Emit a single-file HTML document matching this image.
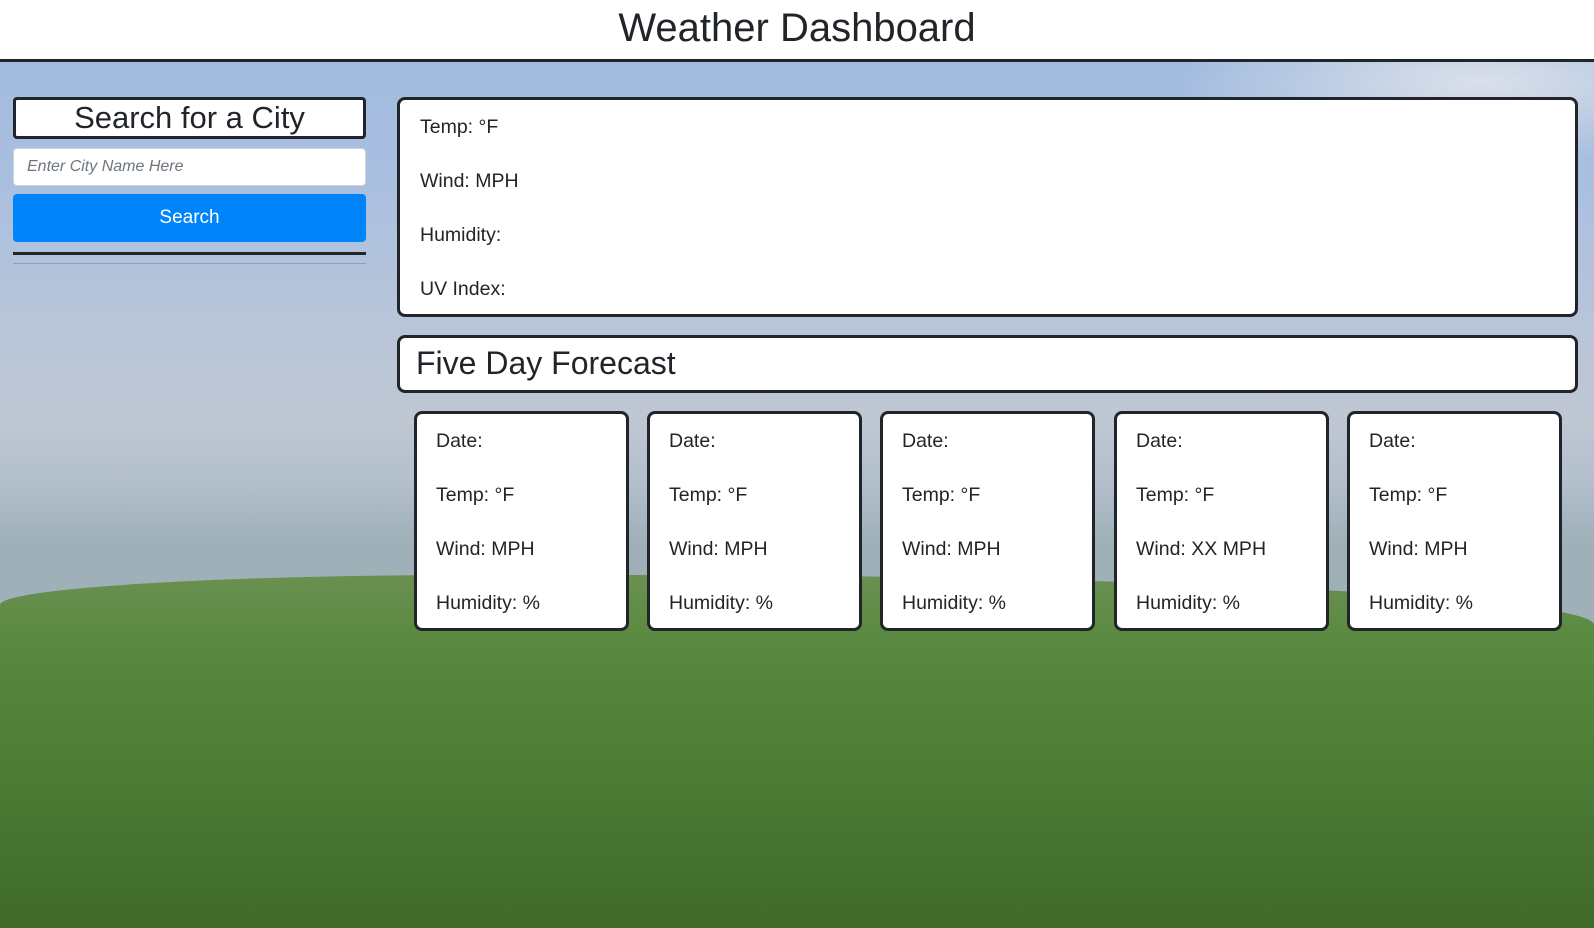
<!DOCTYPE html>
<html><head><meta charset="utf-8"><style>
*{box-sizing:border-box;margin:0;padding:0}
body{width:1594px;height:928px;overflow:hidden;font-family:"Liberation Sans",Arial,sans-serif;color:#212529;position:relative}
header{height:62px;background:#fff;border-bottom:3px solid #212529;text-align:center;font-size:40px;line-height:56px}
.bg{position:absolute;top:62px;left:0;width:1594px;height:866px;
background:
radial-gradient(ellipse 300px 80px at 1480px 20px,rgba(225,228,235,.9),rgba(225,228,235,0)),
linear-gradient(180deg,#a2bcdf 0px,#aabfe0 120px,#b7c4d9 250px,#bfc7d3 360px,#b3bfcc 420px,#9fb0b8 480px);}
.hill{position:absolute;left:0;top:575px;width:1594px;height:353px;background:linear-gradient(180deg,#6a9050,#5a8a42 60px,#4e7e36 180px,#3f6a2a 353px);border-radius:30% 60% 0 0/30px 50px 0 0}
.box{position:absolute;background:#fff;border:3px solid #212529;border-radius:8px}
.t{position:absolute;font-size:19.5px;white-space:nowrap}
</style></head><body>
<header>Weather Dashboard</header>
<div class="bg"></div>
<div class="hill"></div>
<div class="box" style="left:13px;top:97px;width:353px;height:42px;border-radius:4px;text-align:center;font-size:31px;line-height:36px">Search for a City</div>
<div style="position:absolute;left:13px;top:148px;width:353px;height:38px;background:#fff;border:1px solid #ced4da;border-radius:4px;font-style:italic;color:#6c757d;font-size:16px;line-height:36px;padding-left:13px">Enter City Name Here</div>
<div style="position:absolute;left:13px;top:194px;width:353px;height:48px;background:#0084fa;border-radius:4px;color:#fff;font-size:19px;line-height:48px;text-align:center">Search</div>
<div style="position:absolute;left:13px;top:252px;width:353px;height:3px;background:#212529"></div>
<div style="position:absolute;left:13px;top:263px;width:353px;height:1px;background:#8fa0b5"></div>
<div class="box" style="left:397px;top:97px;width:1181px;height:220px">
<div class="t" style="left:20px;top:16px">Temp: °F</div>
<div class="t" style="left:20px;top:70px">Wind: MPH</div>
<div class="t" style="left:20px;top:124px">Humidity:</div>
<div class="t" style="left:20px;top:178px">UV Index:</div>
</div>
<div class="box" style="left:397px;top:335px;width:1181px;height:58px;font-size:32px;line-height:50px;padding-left:16px">Five Day Forecast</div>
<div class="box" style="left:414px;top:411px;width:215px;height:220px"><div class="t" style="left:19px;top:16px">Date:</div><div class="t" style="left:19px;top:70px">Temp: °F</div><div class="t" style="left:19px;top:124px">Wind: MPH</div><div class="t" style="left:19px;top:178px">Humidity: %</div></div>
<div class="box" style="left:647px;top:411px;width:215px;height:220px"><div class="t" style="left:19px;top:16px">Date:</div><div class="t" style="left:19px;top:70px">Temp: °F</div><div class="t" style="left:19px;top:124px">Wind: MPH</div><div class="t" style="left:19px;top:178px">Humidity: %</div></div>
<div class="box" style="left:880px;top:411px;width:215px;height:220px"><div class="t" style="left:19px;top:16px">Date:</div><div class="t" style="left:19px;top:70px">Temp: °F</div><div class="t" style="left:19px;top:124px">Wind: MPH</div><div class="t" style="left:19px;top:178px">Humidity: %</div></div>
<div class="box" style="left:1114px;top:411px;width:215px;height:220px"><div class="t" style="left:19px;top:16px">Date:</div><div class="t" style="left:19px;top:70px">Temp: °F</div><div class="t" style="left:19px;top:124px">Wind: XX MPH</div><div class="t" style="left:19px;top:178px">Humidity: %</div></div>
<div class="box" style="left:1347px;top:411px;width:215px;height:220px"><div class="t" style="left:19px;top:16px">Date:</div><div class="t" style="left:19px;top:70px">Temp: °F</div><div class="t" style="left:19px;top:124px">Wind: MPH</div><div class="t" style="left:19px;top:178px">Humidity: %</div></div>
</body></html>
